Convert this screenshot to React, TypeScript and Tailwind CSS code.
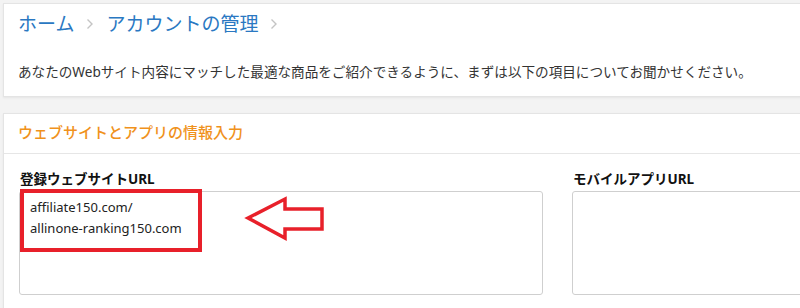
import React from 'react';

// Breadcrumb separator chevron
const Chevron: React.FC = () => (
    <svg width="8" height="12" viewBox="0 0 8 12" className="mx-[12px] shrink-0">
        <path d="M1.5 1.5 L6 6 L1.5 10.5" fill="none" stroke="#c4c4c4" strokeWidth="1.4" />
    </svg>
);

const font = { fontFamily: '"Noto Sans", "Noto Sans CJK JP", sans-serif' };

export default function App() {
    return (
        <div className="w-[800px] h-[308px] overflow-hidden bg-[#f3f3f3]" style={font}>
            <div className="w-[1115px] pt-[3px] pl-[3px]">
                {/* Header card */}
                <div className="h-[94px] bg-white border border-[#e4e4e4] shadow-[0_1px_2px_rgba(0,0,0,0.06)] px-[14px]">
                    <div className="flex items-center pt-[6px] text-[19px] leading-[28px] text-[#2a78c2]">
                        <span>ホーム</span>
                        <Chevron />
                        <span>アカウントの管理</span>
                        <Chevron />
                    </div>
                    <p className="mt-[24px] text-[13.6px] leading-[20px] text-[#333]">
                        あなたのWebサイト内容にマッチした最適な商品をご紹介できるように、まずは以下の項目についてお聞かせください。
                    </p>
                </div>

                {/* Website & app card */}
                <div className="mt-[16px] bg-white border border-[#e4e4e4] shadow-[0_1px_2px_rgba(0,0,0,0.06)] h-[220px]">
                    <div className="h-[40px] border-b border-[#e6e6e6] px-[14px] pt-[7px] text-[15px] leading-[22px] font-medium text-[#f0921c]">
                        ウェブサイトとアプリの情報入力
                    </div>
                    <div className="flex gap-[29px] px-[15px] pt-[16px]">
                        <div className="w-[524px]">
                            <div className="text-[13.5px] leading-[18px] font-bold text-[#111] mb-[3px] pl-[1px]">登録ウェブサイトURL</div>
                            <div className="relative h-[104px] border border-[#cfcfcf] rounded-[3px] pl-[10px] pt-[5px] text-[13px] leading-[21px] text-[#222]">
                                <div>affiliate150.com/</div>
                                <div>allinone-ranking150.com</div>
                                {/* highlight box */}
                                <div className="absolute left-[0px] top-[-3px] w-[182px] h-[63px] border-[4px] border-[#e8202a]" />
                                {/* arrow */}
                                <svg width="82" height="48" viewBox="0 0 82 48" className="absolute left-[224px] top-[3px]">
                                    <polygon
                                        points="4,23 41,4 41,14 78,14 78,34 41,34 41,43"
                                        fill="none"
                                        stroke="#e8202a"
                                        strokeWidth="3.5"
                                        strokeLinejoin="miter"
                                    />
                                </svg>
                            </div>
                        </div>
                        <div className="w-[524px]">
                            <div className="text-[13.5px] leading-[18px] font-bold text-[#111] mb-[3px] pl-[1px]">モバイルアプリURL</div>
                            <div className="h-[104px] border border-[#cfcfcf] rounded-[3px]" />
                        </div>
                    </div>
                </div>
            </div>
        </div>
    );
}
